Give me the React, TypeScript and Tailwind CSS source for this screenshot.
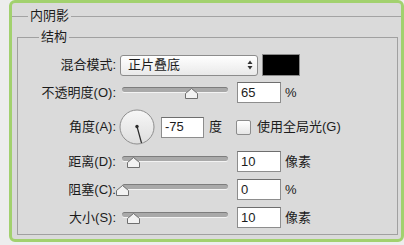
import React from "react";

const font = { fontFamily: '"Liberation Sans", "Noto Sans CJK SC", sans-serif' };

function Thumb({ left }: { left: number }) {
  return (
    <svg width="13" height="11" viewBox="0 0 13 11" className="absolute top-[1px]" style={{ left: left - 6 }}>
      <path d="M6.5 0.5 L12.5 5.5 L12.5 10.5 L0.5 10.5 L0.5 5.5 Z" fill="#f2f2f2" stroke="#6f6f6f" strokeWidth="1" />
    </svg>
  );
}

function Slider({ pos }: { pos: number }) {
  return (
    <div className="relative ml-[2px] w-[106px] h-full pt-[5px]">
      <div className="h-[5px] rounded-full bg-[#a9a9a9] border-t border-[#7d7d7d] shadow-[0_1px_0_#f3f3f3]" />
      <div className="absolute top-[5px] left-0 right-0">
        <Thumb left={pos} />
      </div>
    </div>
  );
}

function Field({ value, w = "w-[44px]" }: { value: string; w?: string }) {
  return (
    <div className={`${w} h-[21px] bg-white border border-[#8d8d8d] border-t-[#6e6e6e] pl-[3px] flex items-center text-[13px] text-[#1c1c1c]`}>
      {value}
    </div>
  );
}

function Label({ children }: { children: React.ReactNode }) {
  return <div className="w-[99px] shrink-0 text-right pr-[1px] text-[13px] text-[#1c1c1c]">{children}</div>;
}

function SliderRow({ label, pos, value, unit }: { label: string; pos: number; value: string; unit: string }) {
  return (
    <div className="flex items-center h-[21px]">
      <Label>{label}</Label>
      <div className="ml-[3px] h-full flex items-start">
        <Slider pos={pos} />
      </div>
      <div className="ml-[9px]">
        <Field value={value} />
      </div>
      <span className="ml-[4px] text-[13px] text-[#1c1c1c]">{unit}</span>
    </div>
  );
}

export default function App() {
  return (
    <div className="w-[404px] h-[245px] bg-[#ededed] overflow-hidden" style={font}>
      <div className="ml-[9px] w-[395px] h-[242px] border-[3px] border-[#a2d16e] rounded-[6px] bg-[#dadada] flex flex-col">
        <div className="h-[26px] flex items-center">
          <div className="w-[16px] h-px bg-[#a3a3a3]" />
          <span className="px-[2px] text-[13px] text-[#1c1c1c]">内阴影</span>
          <div className="flex-1 h-px bg-[#a3a3a3]" />
        </div>
        <fieldset className="ml-[5px] mr-[3px] border border-[#a0a0a0] pb-[6px]">
          <legend className="ml-[21px] px-[2px] text-[13px] leading-[16px] text-[#1c1c1c]">结构</legend>
          <div className="flex flex-col pt-[9px]">
            <div className="flex items-center h-[22px]">
              <Label>混合模式:</Label>
              <div className="ml-[3px] w-[138px] h-[21px] rounded-[3px] border border-[#8c8c8c] bg-gradient-to-b from-white to-[#e9e9e9] flex items-center pl-[7px] pr-[4px]">
                <span className="flex-1 text-[13px] text-[#1c1c1c]">正片叠底</span>
                <svg width="6" height="10" viewBox="0 0 6 10">
                  <path d="M3 0.5 L5.5 4 L0.5 4 Z" fill="#333" />
                  <path d="M3 9.5 L5.5 6 L0.5 6 Z" fill="#333" />
                </svg>
              </div>
              <div className="ml-[4px] w-[38px] h-[22px] bg-black border border-[#8a8a8a]" />
            </div>

            <div className="mt-[6px] flex items-center h-[21px]">
              <Label>不透明度(O):</Label>
              <div className="ml-[3px] h-full flex items-start">
                <Slider pos={69} />
              </div>
              <div className="ml-[9px]">
                <Field value="65" />
              </div>
              <span className="ml-[4px] text-[13px] text-[#1c1c1c]">%</span>
            </div>

            <div className="mt-[6px] flex items-center h-[36px]">
              <Label>角度(A):</Label>
              <svg width="36" height="36" viewBox="0 0 36 36" className="ml-[2px]">
                <defs>
                  <linearGradient id="dial" x1="0" y1="0" x2="0" y2="1">
                    <stop offset="0" stopColor="#f7f7f7" />
                    <stop offset="1" stopColor="#dedede" />
                  </linearGradient>
                </defs>
                <circle cx="18" cy="18" r="17" fill="url(#dial)" stroke="#8e8e8e" strokeWidth="1" />
                <line x1="18" y1="17.5" x2="22.5" y2="34" stroke="#2a2a2a" strokeWidth="1.2" />
                <circle cx="18" cy="17.5" r="1.7" fill="#2a2a2a" />
              </svg>
              <div className="ml-[6px]">
                <Field value="-75" w="w-[43px]" />
              </div>
              <span className="ml-[5px] text-[13px] text-[#1c1c1c]">度</span>
              <div className="ml-[14px] w-[15px] h-[15px] rounded-[2px] border border-[#8c8c8c] bg-gradient-to-b from-white to-[#e6e6e6]" />
              <span className="ml-[6px] text-[13px] text-[#1c1c1c]">使用全局光(G)</span>
            </div>

            <div className="mt-[6px]">
              <SliderRow label="距离(D):" pos={11} value="10" unit="像素" />
            </div>
            <div className="mt-[7px]">
              <SliderRow label="阻塞(C):" pos={0} value="0" unit="%" />
            </div>
            <div className="mt-[7px]">
              <SliderRow label="大小(S):" pos={11} value="10" unit="像素" />
            </div>
          </div>
        </fieldset>
      </div>
    </div>
  );
}
